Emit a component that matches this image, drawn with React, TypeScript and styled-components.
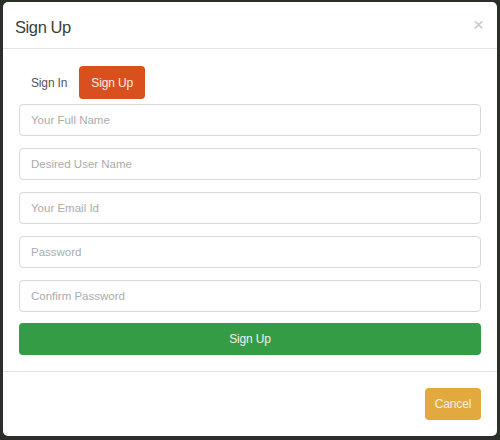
import React from "react";
import styled, { createGlobalStyle } from "styled-components";

const Global = createGlobalStyle`
  html, body { margin: 0; padding: 0; background: #2b2f2a; }
  body { width: 500px; height: 440px; overflow: hidden; font-family: "Liberation Sans", Arial, sans-serif; }
  * { box-sizing: border-box; }
`;

const Backdrop = styled.div`
  width: 500px;
  height: 440px;
  padding: 2px 3px 4px 3px;
  display: flex;
`;

const Modal = styled.div`
  flex: 1;
  background: #fff;
  border-radius: 5px;
  display: flex;
  flex-direction: column;
`;

const Header = styled.div`
  height: 47px;
  padding: 0 12px;
  border-bottom: 1px solid #e5e5e5;
  display: flex;
  align-items: center;
  justify-content: space-between;
`;

const Title = styled.h4`
  margin: 0;
  font-size: 16.5px;
  letter-spacing: -0.4px;
  font-weight: normal;
  color: #3a4038;
  padding-top: 4px;
`;

const Close = styled.span`
  font-size: 19px;
  color: #c8c8c8;
  line-height: 1;
  margin-right: 1px;
  margin-top: -2px;
`;

const Body = styled.div`
  padding: 18px 16px 16px 16px;
  display: flex;
  flex-direction: column;
  border-bottom: 1px solid #e5e5e5;
`;

const Tabs = styled.div`
  display: flex;
  align-items: center;
  margin-top: -1px;
  margin-bottom: 5px;
`;

const Tab = styled.div<{ $active?: boolean }>`
  height: 33px;
  padding: 0 ${(p) => (p.$active ? "12px" : "12px")};
  display: flex;
  align-items: center;
  font-size: 12px;
  letter-spacing: -0.15px;
  border-radius: 4px;
  color: ${(p) => (p.$active ? "#fbeee4" : "#555")};
  background: ${(p) => (p.$active ? "#d9501e" : "transparent")};
`;

const Form = styled.div`
  display: flex;
  flex-direction: column;
  gap: 12px;
`;

const Input = styled.input`
  height: 32px;
  width: 100%;
  border: 1px solid #d8d8d8;
  border-radius: 4px;
  padding: 0 11px;
  font-family: "Liberation Sans", Arial, sans-serif;
  font-size: 11.5px;
  color: #555;
  &::placeholder { color: #ababab; }
`;

const Button = styled.div<{ $color: string }>`
  height: 32px;
  border-radius: 4px;
  background: ${(p) => p.$color};
  color: #f0f0f0;
  font-size: 12px;
  letter-spacing: -0.15px;
  display: flex;
  align-items: center;
  justify-content: center;
`;

const SubmitButton = styled(Button)`
  margin-top: -1px;
`;

const Footer = styled.div`
  flex: 1;
  display: flex;
  justify-content: flex-end;
  padding: 16px 16px;
`;

const CancelButton = styled(Button)`
  width: 56px;
`;

export default function App() {
  return (
    <>
      <Global />
      <Backdrop>
        <Modal>
          <Header>
            <Title>Sign Up</Title>
            <Close>×</Close>
          </Header>
          <Body>
            <Tabs>
              <Tab>Sign In</Tab>
              <Tab $active>Sign Up</Tab>
            </Tabs>
            <Form>
              <Input placeholder="Your Full Name" />
              <Input placeholder="Desired User Name" />
              <Input placeholder="Your Email Id" />
              <Input placeholder="Password" type="password" />
              <Input placeholder="Confirm Password" type="password" />
              <SubmitButton $color="#359c46">Sign Up</SubmitButton>
            </Form>
          </Body>
          <Footer>
            <CancelButton $color="#e2a93e">Cancel</CancelButton>
          </Footer>
        </Modal>
      </Backdrop>
    </>
  );
}
